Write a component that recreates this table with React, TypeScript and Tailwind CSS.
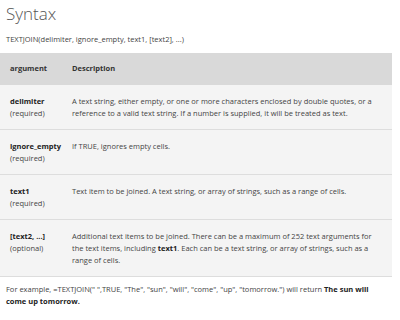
const rows = [
  {
    arg: "delimiter",
    req: "(required)",
    desc: (
      <>A text string, either empty, or one or more characters enclosed by double quotes, or a reference to a valid text string. If a number is supplied, it will be treated as text.</>
    ),
  },
  { arg: "ignore_empty", req: "(required)", desc: <>If TRUE, ignores empty cells.</> },
  {
    arg: "text1",
    req: "(required)",
    desc: <>Text item to be joined. A text string, or array of strings, such as a range of cells.</>,
  },
  {
    arg: "[text2, ...]",
    req: "(optional)",
    desc: (
      <>
        Additional text items to be joined. There can be a maximum of 252 text arguments for the text items, including{" "}
        <b className="font-bold text-[#222]">text1</b>. Each can be a text string, or array of strings, such as a range of cells.
      </>
    ),
  },
];

export default function App() {
  return (
    <div className="w-[400px] h-[320px] bg-white overflow-hidden text-[#444] font-['Open_Sans',sans-serif]">
      <h2 className="px-[6px] pt-[3px] text-[17px] leading-[22px] font-light text-[#555]">Syntax</h2>
      <p className="px-[6px] mt-[9px] text-[7.5px] leading-[11px]">TEXTJOIN(delimiter, ignore_empty, text1, [text2], ...)</p>

      <div className="mt-[8px] w-[392px]">
        <div className="flex h-[32px] items-center bg-[#d9d9d9] text-[7.5px] font-bold text-[#333]">
          <div className="w-[72px] pl-[10px]">argument</div>
          <div>Description</div>
        </div>
        {rows.map((r) => (
          <div key={r.arg} className="flex bg-[#f4f4f4] border-b border-[#ddd] py-[10px] text-[7.5px] leading-[12px]">
            <div className="w-[72px] shrink-0 pl-[10px]">
              <div className="font-bold text-[#222]">{r.arg}</div>
              <div>{r.req}</div>
            </div>
            <div className="pr-[12px]">{r.desc}</div>
          </div>
        ))}
      </div>

      <p className="px-[6px] mt-[6px] pr-[20px] text-[7.5px] leading-[12px]">
        For example, =TEXTJOIN(" ",TRUE, "The", "sun", "will", "come", "up", "tomorrow.") will return{" "}
        <b className="font-bold text-[#222]">The sun will come up tomorrow.</b>
      </p>
    </div>
  );
}
